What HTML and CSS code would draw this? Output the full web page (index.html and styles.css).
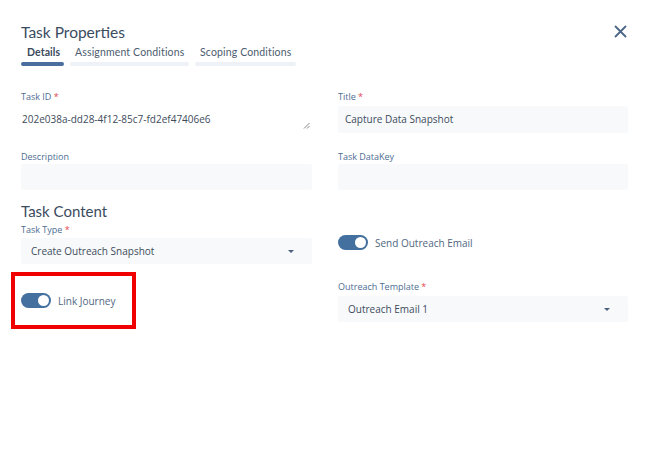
FILE: index.html
```html
<!DOCTYPE html>
<html>
<head>
<meta charset="utf-8">
<link rel="stylesheet" href="styles.css">
</head>
<body>
<div class="dialog">
  <div class="header">
    <h1 class="title">Task Properties</h1>
    <button class="close" aria-label="Close">
      <svg width="13" height="13" viewBox="0 0 13 13"><path d="M1.5 1.5 L11.5 11.5 M11.5 1.5 L1.5 11.5" stroke="#4b6686" stroke-width="1.8" stroke-linecap="round"/></svg>
    </button>
  </div>
  <div class="tabs">
    <div class="tab active"><span class="tab-text">Details</span><span class="tab-bar"></span></div>
    <div class="tab"><span class="tab-text">Assignment Conditions</span><span class="tab-bar"></span></div>
    <div class="tab"><span class="tab-text">Scoping Conditions</span><span class="tab-bar"></span></div>
  </div>

  <div class="grid">
    <div class="field">
      <label class="label">Task ID <span class="req">*</span></label>
      <div class="input textarea">202e038a-dd28-4f12-85c7-fd2ef47406e6
        <svg class="resize" width="7" height="7" viewBox="0 0 7 7"><path d="M1 6.5 L6.5 1 M4 6.5 L6.5 4" stroke="#777" stroke-width="0.9"/></svg>
      </div>
    </div>
    <div class="field">
      <label class="label">Title <span class="req">*</span></label>
      <div class="input filled">Capture Data Snapshot</div>
    </div>

    <div class="field row2">
      <label class="label">Description</label>
      <div class="input filled"></div>
    </div>
    <div class="field row2">
      <label class="label">Task DataKey</label>
      <div class="input filled"></div>
    </div>

    <div class="field row3">
      <h2 class="section">Task Content</h2>
      <label class="label">Task Type <span class="req">*</span></label>
      <div class="input filled select">Create Outreach Snapshot<span class="caret"></span></div>
    </div>
    <div class="field row3 toggle-cell">
      <div class="toggle-row">
        <span class="toggle"><span class="knob"></span></span>
        <span class="toggle-label">Send Outreach Email</span>
      </div>
    </div>

    <div class="field row4">
      <div class="highlight">
        <div class="toggle-row">
          <span class="toggle"><span class="knob"></span></span>
          <span class="toggle-label">Link Journey</span>
        </div>
      </div>
    </div>
    <div class="field row4 right4">
      <label class="label">Outreach Template <span class="req">*</span></label>
      <div class="input filled select">Outreach Email 1<span class="caret"></span></div>
    </div>
  </div>
</div>
</body>
</html>
```
FILE: styles.css
```css
* { box-sizing: border-box; }
html, body { margin: 0; padding: 0; background: #fff; }
body { font-family: "Open Sans", "Liberation Sans", sans-serif; color: #3c4a5b; }

.dialog { padding: 21px 21px 0 21px; width: 649px; }

.header { display: flex; justify-content: space-between; align-items: center; height: 22px; }
.title { margin: 0; font-family: Lato, "Open Sans", sans-serif; font-weight: 400; font-size: 15.5px; color: #3a4b5e; }
.close { background: none; border: 0; padding: 0; margin-right: 1px; margin-top: -1px; width: 13px; height: 13px; display: flex; }

.tabs { display: flex; gap: 6px; margin-top: 2px; }
.tab { display: flex; flex-direction: column; }
.tab-text { font-size: 10.5px; line-height: 14px; color: #4d5c6e; padding: 0 6px; font-family: Lato, "Open Sans", sans-serif; letter-spacing: 0.15px; white-space: nowrap; }
.tab.active .tab-text { font-weight: 700; color: #3b4a5c; letter-spacing: 0.1px; }
.tab-bar { display: block; height: 4px; margin-top: 3px; border-radius: 2px; background: #eef1f5; }
.tab.active .tab-bar { background: #4a6f9e; }
.tab:nth-child(1) { width: 43px; }
.tab:nth-child(1) .tab-text { padding-left: 6px; }
.tab:nth-child(2) { width: 119px; }
.tab:nth-child(3) { width: 101px; }
.tab:nth-child(2) .tab-text, .tab:nth-child(3) .tab-text { padding-left: 5px; }

.grid { display: grid; grid-template-columns: 291px 290px; column-gap: 26px; margin-top: 25px; }

.field { display: flex; flex-direction: column; }
.label { font-size: 9px; line-height: 12px; color: #4d6d93; margin-bottom: 3px; }
.req { color: #e5454f; }

.input { height: 27px; font-size: 10px; line-height: 27px; color: #3e4b5b; padding: 0 7px; border-radius: 2px; }
.filled { background: #f7f9fb; }
.textarea { position: relative; padding: 0 1px; }
.resize { position: absolute; right: 2px; bottom: 4px; }

.row2 { margin-top: 18px; }
.row2 .label { margin-bottom: 1px; }
.row2 .input { height: 26px; }

.row3 { margin-top: 13px; }
.section { margin: 0; font-family: Lato, "Open Sans", sans-serif; font-weight: 400; font-size: 15px; line-height: 17px; color: #3a4b5e; }
.row3 .label { margin-top: 4px; margin-bottom: 2px; }
.row3 .select { height: 26px; padding-left: 10px; }

.select { position: relative; }
.caret { position: absolute; right: 18px; top: 12px; width: 0; height: 0; border-left: 3.5px solid transparent; border-right: 3.5px solid transparent; border-top: 3.5px solid #4a607c; }

.toggle-cell { justify-content: flex-end; padding-bottom: 14px; }
.toggle-row { display: flex; align-items: center; gap: 7px; }
.toggle { width: 30px; height: 15px; border-radius: 8px; background: #44709f; position: relative; display: inline-block; }
.knob { position: absolute; right: 2px; top: 2px; width: 11px; height: 11px; border-radius: 50%; background: #fff; }
.toggle-label { font-size: 10px; color: #506781; }

.row4 { margin-top: 8px; }
.highlight { margin-left: -10px; width: 125px; height: 57px; border: 4px solid #f00000; display: flex; align-items: center; padding-left: 6px; }
.right4 { margin-top: 17px; }
.right4 .select { height: 26px; padding-left: 10px; }
.right4 .label { margin-bottom: 3px; }
```
